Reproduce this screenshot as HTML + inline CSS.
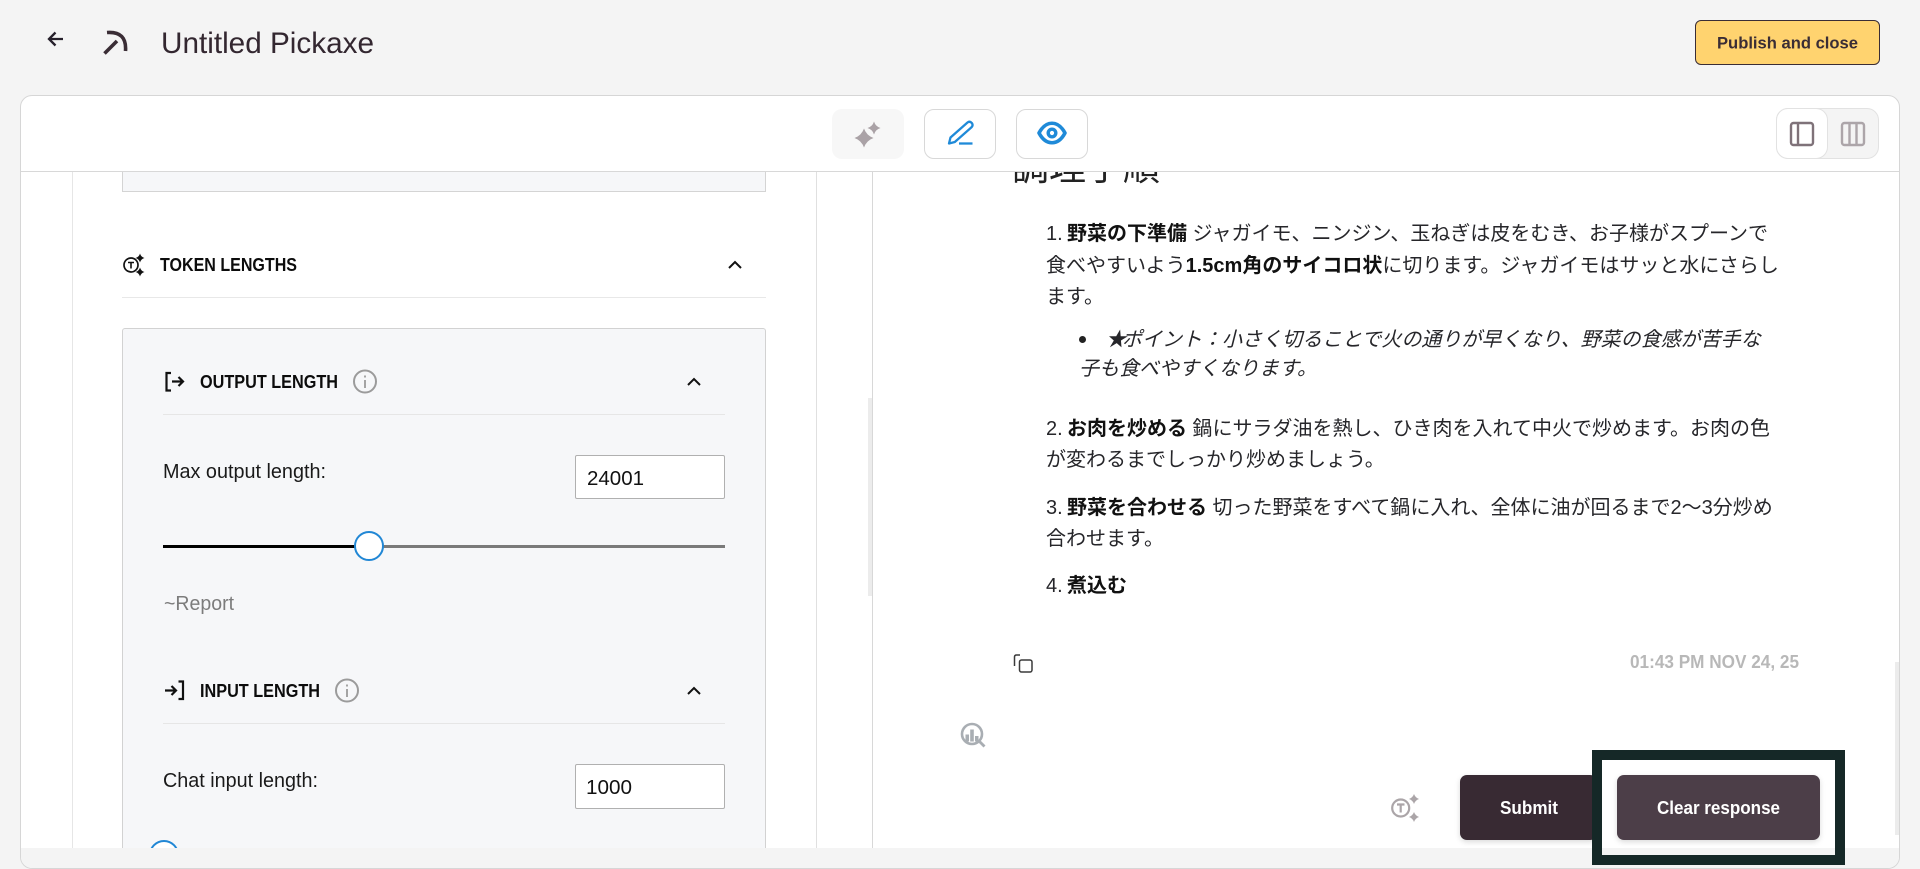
<!DOCTYPE html>
<html lang="ja">
<head>
<meta charset="utf-8">
<title>Untitled Pickaxe</title>
<style>
html,body{margin:0;padding:0;width:1920px;height:869px;overflow:hidden;background:#f4f4f4;font-family:"Liberation Sans","Noto Sans CJK JP",sans-serif;}
.abs{position:absolute;box-sizing:border-box;}
#card{left:20px;top:95px;width:1880px;height:774px;background:#fff;border:1px solid #d6d6d6;border-radius:12px;}
.btn{height:50px;top:109px;border-radius:10px;border:1px solid #d8d8d8;background:#fff;}
.l{position:absolute;white-space:nowrap;font-size:20px;line-height:31px;height:31px;color:#26262a;font-family:"Liberation Sans","Noto Sans CJK JP",sans-serif;}
.l b{color:#111;font-weight:700;}
.m{display:inline-block;width:21px;}
svg text{font-family:"Liberation Sans",sans-serif;}
</style>
</head>
<body>
<div class="abs" id="card"></div>
<div class="abs" style="left:21px;top:171px;width:1878px;height:1px;background:#d8d8d8"></div>
<div class="abs" style="left:72px;top:172px;width:1px;height:676px;background:#e6e6e6"></div>
<div class="abs" style="left:816px;top:172px;width:1px;height:676px;background:#e0e0e0"></div>
<div class="abs" style="left:872px;top:172px;width:1px;height:676px;background:#d8d8d8"></div>
<div class="abs" style="left:868px;top:398px;width:4px;height:198px;background:#ececec"></div>
<div class="abs" style="left:1895px;top:662px;width:4px;height:173px;background:#ececec"></div>

<div class="abs" style="left:122px;top:172px;width:644px;height:20px;background:#f6f7f9;border:1px solid #d4d4d4;border-top:0"></div>
<div class="abs" style="left:122px;top:297px;width:644px;height:1px;background:#e8e8e8"></div>
<div class="abs" style="left:122px;top:328px;width:644px;height:520px;background:#f6f7f9;border:1px solid #d2d2d2;border-bottom:0;border-radius:3px 3px 0 0"></div>
<div class="abs" style="left:163px;top:414px;width:562px;height:1px;background:#e6e6e6"></div>
<div class="abs" style="left:163px;top:723px;width:562px;height:1px;background:#e6e6e6"></div>
<div class="abs" style="left:575px;top:455px;width:150px;height:44px;background:#fff;border:1px solid #b0b0b0;border-radius:2px"></div>
<div class="abs" style="left:575px;top:764px;width:150px;height:45px;background:#fff;border:1px solid #b0b0b0;border-radius:2px"></div>
<div class="abs" style="left:163px;top:545px;width:206px;height:3px;background:#000"></div>
<div class="abs" style="left:369px;top:545px;width:356px;height:3px;background:#7a7a7a"></div>
<div class="abs" style="left:354px;top:531px;width:30px;height:30px;background:#fff;border:2px solid #2187d5;border-radius:50%"></div>
<div class="abs" style="left:149px;top:840px;width:30px;height:8px;overflow:hidden"><div class="abs" style="left:0;top:0;width:30px;height:30px;background:#fff;border:2px solid #2187d5;border-radius:50%"></div></div>

<div class="abs" style="left:832px;top:109px;width:72px;height:50px;background:#f7f7f7;border-radius:10px"></div>
<div class="abs btn" style="left:924px;width:72px"></div>
<div class="abs btn" style="left:1016px;width:72px"></div>
<div class="abs" style="left:1776px;top:108px;width:103px;height:51px;background:#f4f4f4;border:1px solid #e2e2e2;border-radius:12px"></div>
<div class="abs" style="left:1776px;top:108px;width:52px;height:51px;background:#fff;border:1px solid #e2e2e2;border-radius:12px"></div>
<div class="abs" style="left:1695px;top:20px;width:185px;height:45px;background:#ffd36f;border:1px solid #3a2d35;border-radius:6px"></div>

<div class="abs" style="left:1000px;top:172px;width:300px;height:30px;overflow:hidden">
  <div class="l" style="left:12px;top:-29px;font-size:37px;line-height:50px;height:50px;color:#222">調理手順</div>
</div>
<div class="l" style="left:1046px;top:219px"><span class="m">1.</span><b>野菜の下準備</b> ジャガイモ、ニンジン、玉ねぎは皮をむき、お子様がスプーンで</div>
<div class="l" style="left:1046px;top:251px">食べやすいよう<b>1.5cm角のサイコロ状</b>に切ります。ジャガイモはサッと水にさらし</div>
<div class="l" style="left:1046px;top:282px">ます。</div>
<div class="abs" style="left:1079px;top:336px;width:7px;height:7px;background:#222;border-radius:50%"></div>
<div class="l" style="left:1106px;top:325px"><i><span style="letter-spacing:-4px">★</span>ポイント：小さく切ることで火の通りが早くなり、野菜の食感が苦手な</i></div>
<div class="l" style="left:1079px;top:354px"><i>子も食べやすくなります。</i></div>
<div class="l" style="left:1046px;top:414px"><span class="m">2.</span><b>お肉を炒める</b> 鍋にサラダ油を熱し、ひき肉を入れて中火で炒めます。お肉の色</div>
<div class="l" style="left:1046px;top:445px">が変わるまでしっかり炒めましょう。</div>
<div class="l" style="left:1046px;top:493px"><span class="m">3.</span><b>野菜を合わせる</b> 切った野菜をすべて鍋に入れ、全体に油が回るまで2〜3分炒め</div>
<div class="l" style="left:1046px;top:524px">合わせます。</div>
<div class="l" style="left:1046px;top:571px"><span class="m">4.</span><b>煮込む</b></div>

<div class="abs" style="left:1460px;top:775px;width:137px;height:65px;background:#382a33;border-radius:7px;box-shadow:0 2px 6px rgba(0,0,0,.15)"></div>
<div class="abs" style="left:1617px;top:775px;width:203px;height:65px;background:#4c3e48;border-radius:7px;box-shadow:0 2px 6px rgba(0,0,0,.15)"></div>

<div class="abs" style="left:21px;top:848px;width:1878px;height:20px;background:#f4f4f4;border-radius:0 0 11px 11px"></div>

<svg class="abs" style="left:0;top:0" width="1920" height="869" viewBox="0 0 1920 869">
  <!-- back arrow -->
  <path d="M63 39H49M55.5 32.5L49 39l6.5 6.5" fill="none" stroke="#26202b" stroke-width="2.3"/>
  <!-- pickaxe -->
  <path d="M104.500 53.500L117 41" fill="none" stroke="#3a2d35" stroke-width="3.600"/>
  <path d="M107 32.500Q127 31 125.500 51" fill="none" stroke="#3a2d35" stroke-width="3.600"/>
  <text x="161" y="53" font-size="30" fill="#332730" textLength="213" lengthAdjust="spacingAndGlyphs">Untitled Pickaxe</text>
  <text x="1717" y="48.500" font-size="17" font-weight="700" fill="#3a2d35" textLength="141" lengthAdjust="spacingAndGlyphs">Publish and close</text>

  <!-- sparkles -->
  <path d="M864 128.500Q866.500 135.500 873.500 138Q866.500 140.500 864 147.500Q861.500 140.500 854.500 138Q861.500 135.500 864 128.500Z" fill="#aaa2a6"/>
  <path d="M874 121.500Q875.500 126.500 880.500 128Q875.500 129.500 874 134.500Q872.500 129.500 867.500 128Q872.500 126.500 874 121.500Z" fill="#aaa2a6"/>
  <!-- pen -->
  <path d="M949 143.500L950.500 137.500L967.500 122.500Q969.700 120.800 971.800 123Q973.500 125.200 971.500 127.300L954.800 142Z" fill="none" stroke="#1f8ad8" stroke-width="2.300" stroke-linejoin="round"/>
  <path d="M959 143.500H972.500" stroke="#1f8ad8" stroke-width="2.300"/>
  <!-- eye -->
  <path d="M1039 133C1046 120 1058 120 1065 133C1058 146 1046 146 1039 133Z" fill="none" stroke="#1f8ad8" stroke-width="3.600" stroke-linejoin="round"/>
  <circle cx="1052" cy="133" r="3.800" fill="none" stroke="#1f8ad8" stroke-width="3.400"/>
  <!-- layout toggles -->
  <rect x="1791" y="123" width="22" height="22" rx="2.500" fill="none" stroke="#7f7279" stroke-width="2.400"/>
  <path d="M1798 123V145" stroke="#7f7279" stroke-width="2.400"/>
  <rect x="1842" y="123" width="22" height="22" rx="2.500" fill="none" stroke="#aca5a9" stroke-width="2.400"/>
  <path d="M1849.500 123V145M1856.500 123V145" stroke="#aca5a9" stroke-width="2.400"/>

  <!-- token icon black -->
  <circle cx="131" cy="265" r="7" fill="none" stroke="#111" stroke-width="1.700"/>
  <path d="M128 262.500H134M131 262.500V268.500" stroke="#111" stroke-width="1.600"/>
  <path d="M140 253.500Q141 257 144.500 258Q141 259 140 262.500Q139 259 135.500 258Q139 257 140 253.500Z" fill="#111"/>
  <path d="M140 267.500Q141 271 144.500 272Q141 273 140 276.500Q139 273 135.500 272Q139 271 140 267.500Z" fill="#111"/>
  <text x="160" y="271" font-size="18" font-weight="700" fill="#0c0c0c" textLength="137" lengthAdjust="spacingAndGlyphs">TOKEN LENGTHS</text>
  <path d="M729 268l6-6 6 6" fill="none" stroke="#111" stroke-width="2"/>

  <!-- output -->
  <path d="M171 373H166.500V390.500H171" fill="none" stroke="#111" stroke-width="2.200"/>
  <path d="M172 381.500H183M178.500 377L183 381.500L178.500 386" fill="none" stroke="#111" stroke-width="2.200"/>
  <text x="200" y="388" font-size="18" font-weight="700" fill="#0c0c0c" textLength="138" lengthAdjust="spacingAndGlyphs">OUTPUT LENGTH</text>
  <circle cx="365" cy="381.500" r="11" fill="none" stroke="#9b9b9b" stroke-width="2"/>
  <path d="M365 380V388M365 375.500V377.500" stroke="#9b9b9b" stroke-width="1.800"/>
  <path d="M688 385l6-6 6 6" fill="none" stroke="#111" stroke-width="2"/>
  <text x="163" y="478" font-size="20" fill="#1a1a1a" textLength="163" lengthAdjust="spacingAndGlyphs">Max output length:</text>
  <text x="587" y="485" font-size="20" fill="#111" textLength="57" lengthAdjust="spacingAndGlyphs">24001</text>
  <text x="164" y="610" font-size="20" fill="#7c7c7c" textLength="70" lengthAdjust="spacingAndGlyphs">~Report</text>

  <!-- input -->
  <path d="M165 690.500H176M171.500 686L176 690.500L171.500 695" fill="none" stroke="#111" stroke-width="2.200"/>
  <path d="M178.500 681.500H183V699H178.500" fill="none" stroke="#111" stroke-width="2.200"/>
  <text x="200" y="697" font-size="18" font-weight="700" fill="#0c0c0c" textLength="120" lengthAdjust="spacingAndGlyphs">INPUT LENGTH</text>
  <circle cx="347" cy="690.500" r="11" fill="none" stroke="#9b9b9b" stroke-width="2"/>
  <path d="M347 689V697M347 684.500V686.500" stroke="#9b9b9b" stroke-width="1.800"/>
  <path d="M688 694l6-6 6 6" fill="none" stroke="#111" stroke-width="2"/>
  <text x="163" y="787" font-size="20" fill="#1a1a1a" textLength="155" lengthAdjust="spacingAndGlyphs">Chat input length:</text>
  <text x="586" y="794" font-size="20" fill="#111" textLength="46" lengthAdjust="spacingAndGlyphs">1000</text>

  <!-- copy -->
  <path d="M1020 655H1016.500Q1014.500 655 1014.500 657V666" fill="none" stroke="#3a3a3a" stroke-width="1.500"/>
  <rect x="1019.500" y="660" width="12.500" height="12" rx="2" fill="none" stroke="#3a3a3a" stroke-width="1.500"/>
  <text x="1630" y="668" font-size="18" font-weight="700" fill="#b8b8b8" textLength="169" lengthAdjust="spacingAndGlyphs">01:43 PM NOV 24, 25</text>

  <!-- analytics -->
  <circle cx="972" cy="734" r="10" fill="none" stroke="#a9aeb3" stroke-width="2.600"/>
  <path d="M979.500 741.500L984.500 746.500" stroke="#a9aeb3" stroke-width="2.800"/>
  <path d="M965.500 734.500h3.500v7h-3.500zM970.200 729.500h3.600v12h-3.600zM975 736h3.500v5.500h-3.500z" fill="#a9aeb3"/>

  <!-- token icon grey -->
  <circle cx="1400.700" cy="808" r="8.500" fill="none" stroke="#aba5a8" stroke-width="2.200"/>
  <path d="M1397 804.500H1404.500M1400.700 804.500V812.500" stroke="#aba5a8" stroke-width="2.200"/>
  <path d="M1414 794Q1415.300 797.700 1419 799Q1415.300 800.300 1414 804Q1412.700 800.300 1409 799Q1412.700 797.700 1414 794Z" fill="#aba5a8"/>
  <path d="M1414 812Q1415.300 815.700 1419 817Q1415.300 818.300 1414 822Q1412.700 818.300 1409 817Q1412.700 815.700 1414 812Z" fill="#aba5a8"/>

  <text x="1500" y="814" font-size="18" font-weight="700" fill="#fff" textLength="58" lengthAdjust="spacingAndGlyphs">Submit</text>
  <text x="1657" y="814" font-size="18" font-weight="700" fill="#fff" textLength="123" lengthAdjust="spacingAndGlyphs">Clear response</text>

  <!-- highlight rectangle -->
  <rect x="1597" y="755" width="243" height="105" fill="none" stroke="#152827" stroke-width="10"/>
</svg>
</body>
</html>
